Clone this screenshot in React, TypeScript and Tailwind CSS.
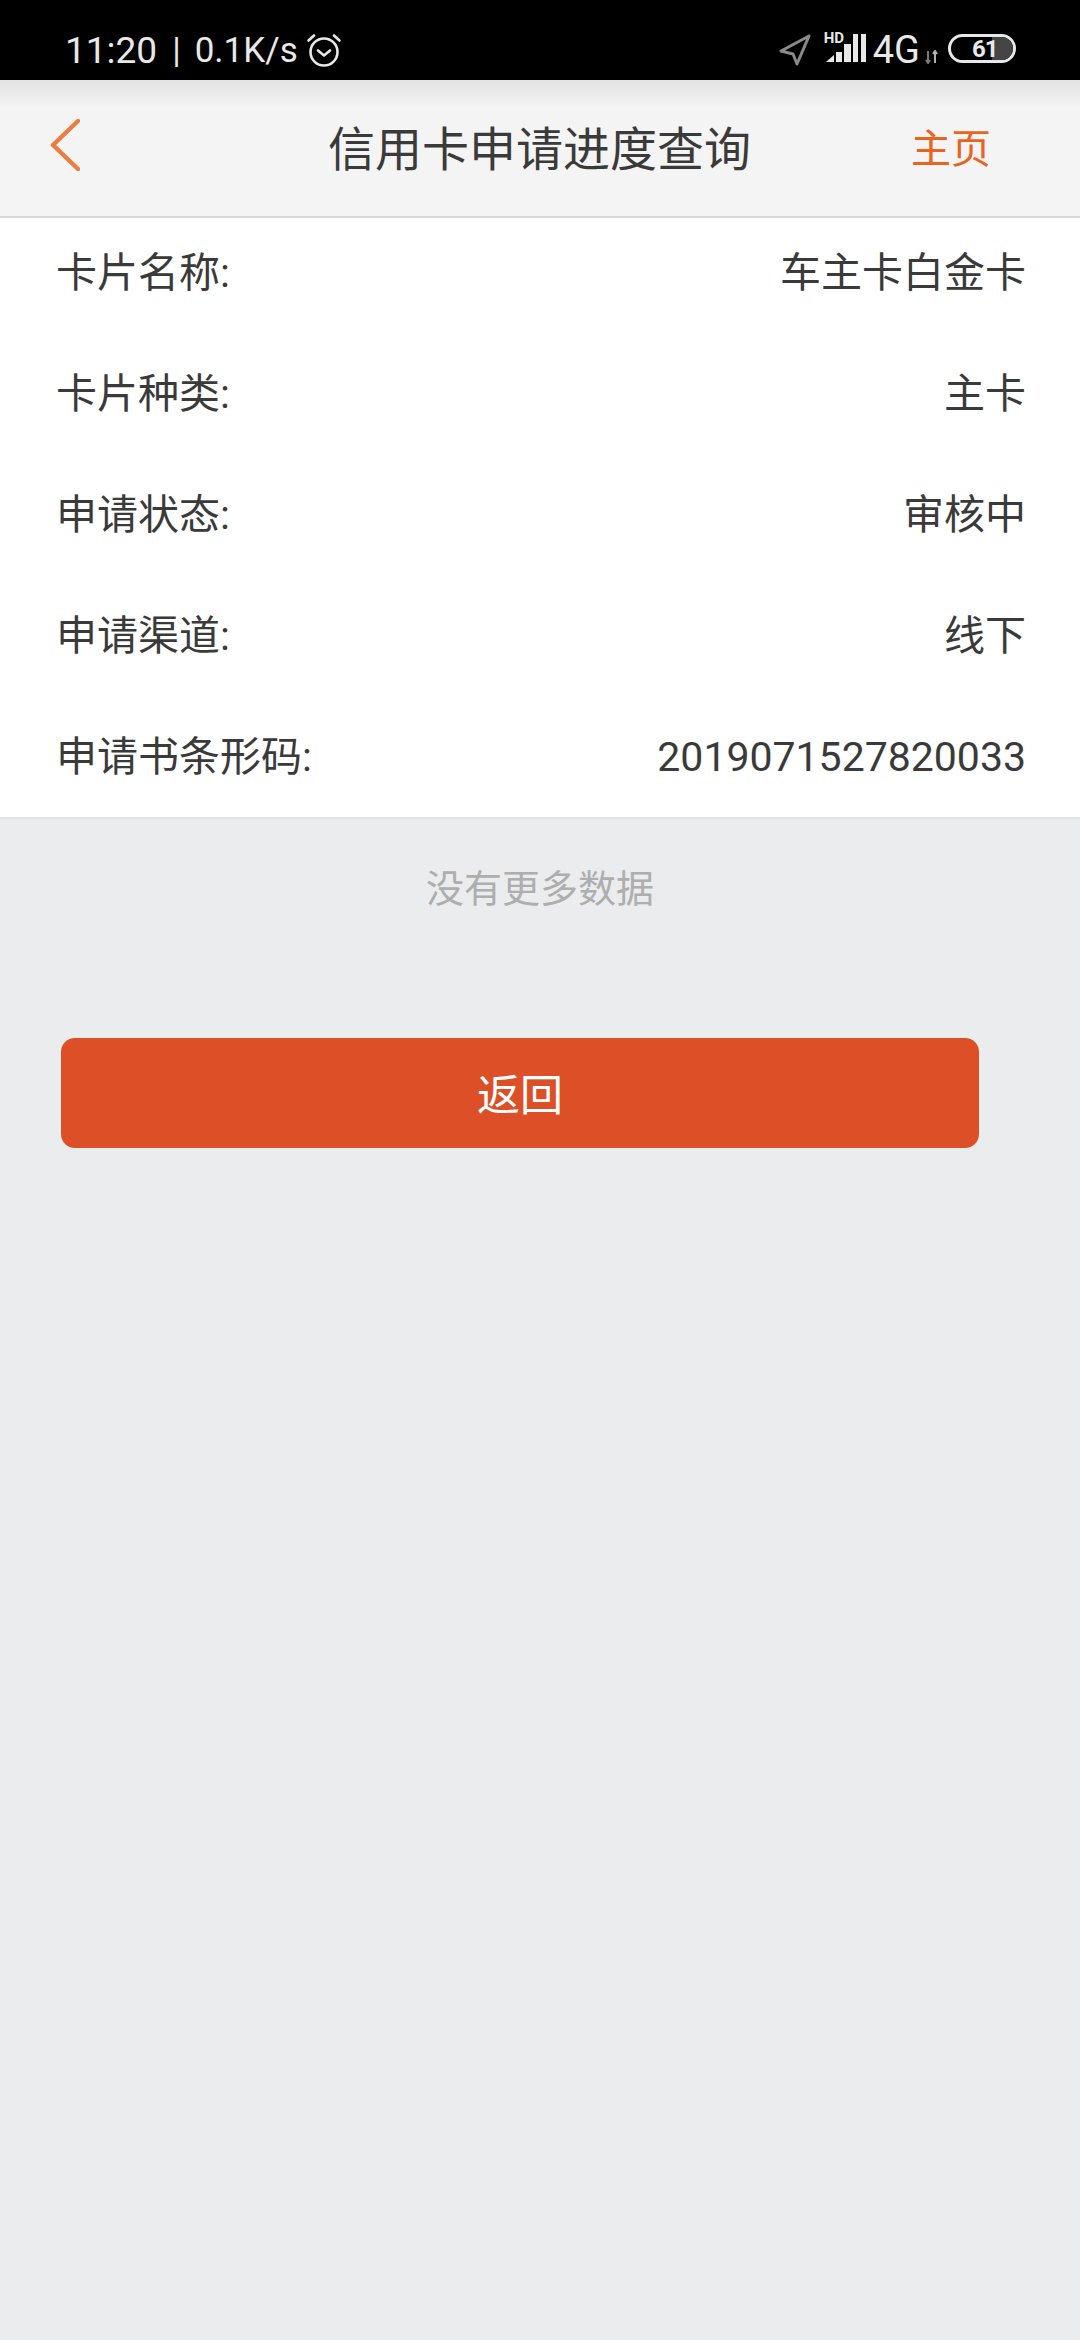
const cjk = "font-['Roboto','Noto_Sans_CJK_SC',sans-serif]";

const rows = [
  { label: '卡片名称:', value: '车主卡白金卡' },
  { label: '卡片种类:', value: '主卡' },
  { label: '申请状态:', value: '审核中' },
  { label: '申请渠道:', value: '线下' },
  { label: '申请书条形码:', value: '2019071527820033' },
];

function AlarmIcon() {
  return (
    <svg width="36" height="36" viewBox="0 0 36 36" fill="none" stroke="#e8e8e8" strokeWidth="2.6" strokeLinecap="round" strokeLinejoin="round">
      <circle cx="18" cy="20" r="13.5" />
      <path d="M12 18.5l6 5 6-5" />
      <path d="M2.5 8.5L8 3.5" />
      <path d="M33.5 8.5L28 3.5" />
    </svg>
  );
}

function LocationIcon() {
  return (
    <svg width="32" height="32" viewBox="0 0 32 32" fill="none" stroke="#8a8a8a" strokeWidth="3" strokeLinejoin="round">
      <path d="M30 2L2 17l12 3 4 10z" />
    </svg>
  );
}

function SignalIcon() {
  return (
    <svg width="40" height="28" viewBox="0 0 40 28" fill="#e8e8e8">
      <path d="M0 28l8-7v7z" />
      <rect x="10" y="18" width="6" height="10" />
      <rect x="18" y="10" width="7" height="18" />
      <rect x="27" y="0" width="5" height="28" />
      <rect x="35" y="0" width="5" height="28" />
    </svg>
  );
}

function StatusBar() {
  return (
    <div className={`h-[80px] bg-black flex items-center justify-between pl-[65px] pr-[64px] pt-[20px] text-[#e8e8e8] ${cjk}`}>
      <div className="flex items-center">
        <span className="text-[37px] leading-none">11:20</span>
        <span className="text-[35px] leading-none ml-[15px]">|</span>
        <span className="text-[35px] leading-none ml-[14px]">0.1K/s</span>
        <span className="ml-[8px] flex"><AlarmIcon /></span>
      </div>
      <div className="flex items-center">
        <LocationIcon />
        <div className="relative ml-[15px] w-[40px] h-[30px] -mt-[6px] flex items-end">
          <span className="absolute left-[-2px] top-[-1px] text-[15px] font-bold leading-none">HD</span>
          <SignalIcon />
        </div>
        <span className="text-[38px] leading-none ml-[7px]">4G</span>
        <svg className="ml-[5px] mt-[14px]" width="13" height="14" viewBox="0 0 13 14" fill="none" strokeWidth="2">
          <path d="M3 1v12M1 10l2 3 2-3" stroke="#7a7a7a" />
          <path d="M10 13V1M8 4l2-3 2 3" stroke="#b0b0b0" />
        </svg>
        <div className="relative ml-[10px] -mt-[3px] w-[68px] h-[29px] rounded-full border-[3px] border-[#e8e8e8] overflow-hidden flex items-center">
          <div className="absolute left-[41px] top-0 bottom-0 right-0 bg-[#454545]" />
          <span className="relative ml-[21px] text-[24px] font-bold leading-none tracking-[-1px]">61</span>
        </div>
      </div>
    </div>
  );
}

function Header() {
  return (
    <div className={`h-[138px] bg-gradient-to-b from-[#e3e3e3] to-[#f4f4f4] to-[20%] border-b-2 border-[#d6d6d6] flex items-center pl-[50px] pr-[89px] ${cjk}`}>
      <svg className="-mt-[6px]" width="30" height="52" viewBox="0 0 30 52" fill="none" stroke="#ec7d3f" strokeWidth="4.4" strokeLinecap="round" strokeLinejoin="round">
        <path d="M28 2L3 26l25 24" />
      </svg>
      <span className="ml-[248px] mt-[2px] text-[47px] leading-none text-[#3a3a3a]">信用卡申请进度查询</span>
      <span className="ml-auto mt-[3px] text-[40px] leading-none text-[#e8641f]">主页</span>
    </div>
  );
}

export default function App() {
  return (
    <div className={`min-h-[2340px] bg-[#ebecee] ${cjk}`}>
      <StatusBar />
      <Header />
      <div className="bg-white border-b-2 border-[#e2e3e5] pt-[35px] pb-[39px] pl-[56px] pr-[54px] flex flex-col gap-[80px]">
        {rows.map((row) => (
          <div key={row.label} className="h-[41px] flex items-center justify-between text-[41px] leading-none text-[#3a3a3a]">
            <span>{row.label}</span>
            <span>{row.value}</span>
          </div>
        ))}
      </div>
      <div className="mt-[48px] text-center text-[38px] leading-[44px] text-[#aeaeae]">没有更多数据</div>
      <button className="block mt-[127px] ml-[61px] w-[918px] h-[110px] pt-[6px] rounded-[14px] bg-[#dc4f27] text-white text-[43px] leading-none">
        返回
      </button>
    </div>
  );
}
